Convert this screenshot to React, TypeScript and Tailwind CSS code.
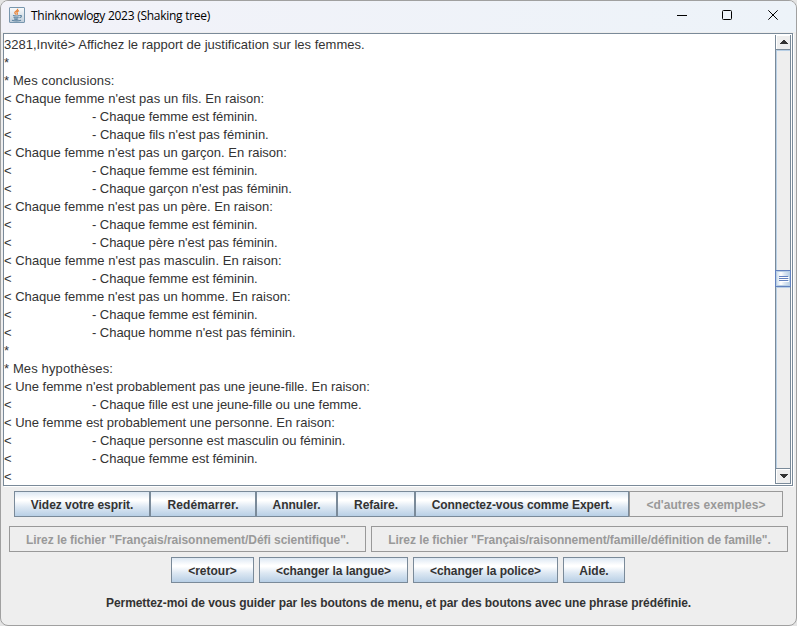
import type { ReactNode } from "react";

type Line = { text: string; indent?: boolean; tracking?: string };

const lines: Line[] = [
  { text: "3281,Invité> Affichez le rapport de justification sur les femmes.", tracking: "tracking-[0.01px]" },
  { text: "*" },
  { text: "* Mes conclusions:", tracking: "tracking-[0.12px]" },
  { text: "< Chaque femme n'est pas un fils. En raison:", tracking: "tracking-[0.035px]" },
  { text: "- Chaque femme est féminin.", indent: true, tracking: "tracking-[-0.045px]" },
  { text: "- Chaque fils n'est pas féminin.", indent: true, tracking: "tracking-[-0.02px]" },
  { text: "< Chaque femme n'est pas un garçon. En raison:", tracking: "tracking-[0.01px]" },
  { text: "- Chaque femme est féminin.", indent: true, tracking: "tracking-[-0.045px]" },
  { text: "- Chaque garçon n'est pas féminin.", indent: true, tracking: "tracking-[-0.04px]" },
  { text: "< Chaque femme n'est pas un père. En raison:", tracking: "tracking-[0px]" },
  { text: "- Chaque femme est féminin.", indent: true, tracking: "tracking-[-0.045px]" },
  { text: "- Chaque père n'est pas féminin.", indent: true, tracking: "tracking-[-0.06px]" },
  { text: "< Chaque femme n'est pas masculin. En raison:", tracking: "tracking-[0.035px]" },
  { text: "- Chaque femme est féminin.", indent: true, tracking: "tracking-[-0.045px]" },
  { text: "< Chaque femme n'est pas un homme. En raison:", tracking: "tracking-[0.01px]" },
  { text: "- Chaque femme est féminin.", indent: true, tracking: "tracking-[-0.045px]" },
  { text: "- Chaque homme n'est pas féminin.", indent: true, tracking: "tracking-[-0.04px]" },
  { text: "*" },
  { text: "* Mes hypothèses:", tracking: "tracking-[0.12px]" },
  { text: "< Une femme n'est probablement pas une jeune-fille. En raison:", tracking: "tracking-[-0.02px]" },
  { text: "- Chaque fille est une jeune-fille ou une femme.", indent: true, tracking: "tracking-[-0.06px]" },
  { text: "< Une femme est probablement une personne. En raison:", tracking: "tracking-[-0.01px]" },
  { text: "- Chaque personne est masculin ou féminin.", indent: true, tracking: "tracking-[-0.025px]" },
  { text: "- Chaque femme est féminin.", indent: true, tracking: "tracking-[-0.045px]" },
  { text: "<" },
];

function MetalButton({ width, disabled, tracking = "", children }: { width: string; disabled?: boolean; tracking?: string; children: ReactNode }) {
  const look = disabled
    ? "border-[#999999] text-[#999999] bg-[#eeeeee]"
    : "border-[#7a8a99] text-[#333333] bg-[linear-gradient(to_bottom,#dde8f3_0%,#ffffff_30%,#ffffff_36%,#dde8f3_62%,#b8cfe5_100%)]";
  return (
    <button disabled={disabled} className={`flex h-[26px] shrink-0 items-center justify-center whitespace-nowrap border pt-[2px] text-[12px] font-bold leading-[14px] ${tracking} ${look} ${width}`}>
      {children}
    </button>
  );
}

function JavaIcon() {
  return (
    <svg width="16" height="16" viewBox="0 0 16 16" fill="none" className="mb-[3px]">
      <defs>
        <linearGradient id="tile" x1="0" y1="0" x2="0" y2="1">
          <stop offset="0" stopColor="#fafbfc" />
          <stop offset="1" stopColor="#bfcdda" />
        </linearGradient>
      </defs>
      <rect x="0.5" y="0.5" width="15" height="15" rx="0.5" fill="url(#tile)" stroke="#7896ae" />
      <path d="M8.6 1.8C9.3 3.8 5.6 4 5.8 5.8c.1.8.9 1.1 1.2 1.8M10 3.6C8 4.6 7.5 5.2 8.2 6.2c.4.6.2 1-.3 1.5" stroke="#e8853a" strokeWidth="1.3" />
      <path d="M4 8.5c1.8.6 4.6.6 6.5 0M4.6 10.4c1.5.5 3.6.5 5 0M5 12c1.2.4 3 .4 4.2 0M10.8 8.6c2.2-.6 2.3 1.4-.3 2.2M3 13.2c2 .9 7 .9 9 0" stroke="#5d83a0" strokeWidth="1.1" />
    </svg>
  );
}

function ScrollBar() {
  return (
    <div className="flex w-4 shrink-0 flex-col border-x border-[#7a8a99] bg-[#eeeeee]">
      <div className="flex h-[15px] items-center justify-center border-b border-b-[#7a8a99] pl-[2px] shadow-[inset_1px_1px_0_#ffffff]">
        <svg width="8" height="4" shapeRendering="crispEdges"><path d="M3 0h2v1h1v1h1v1h1v1H0V3h1V2h1V1h1z" fill="#333333" /></svg>
      </div>
      <div className="h-[220px] border-l border-t border-[#b8cfe5]" />
      <div className="-mx-px flex h-[17px] justify-center border border-[#6382bf] bg-[linear-gradient(to_right,#c5d8eb,#ffffff_35%,#dde8f3_60%,#b8cfe5)] pl-[2px] pt-[5px] shadow-[inset_0_0_0_1px_#b8cfe5]">
        <svg width="10" height="6" shapeRendering="crispEdges">
          <path d="M1 1h9v1H1zM1 3h9v1H1zM1 5h9v1H1z" fill="#ffffff" />
          <path d="M0 0h9v1H0zM0 2h9v1H0zM0 4h9v1H0z" fill="#6382bf" />
        </svg>
      </div>
      <div className="flex-1 border-l border-t border-[#b8cfe5]" />
      <div className="flex h-[16px] items-center justify-center border-y border-[#7a8a99] pl-[2px] shadow-[inset_1px_1px_0_#ffffff]">
        <svg width="8" height="4" shapeRendering="crispEdges"><path d="M0 0h8v1H7v1H6v1H5v1H3V3H2V2H1V1H0z" fill="#333333" /></svg>
      </div>
    </div>
  );
}

export default function App() {
  return (
    <div className="h-[626px] w-[797px] overflow-hidden bg-[#e4e4e4] font-['Liberation_Sans',Arial,sans-serif]">
      <div className="flex h-[626px] w-[797px] flex-col overflow-hidden rounded-[8px] border border-[#a0a0a0] bg-[#eeeeee]">
        <header className="flex h-[31px] shrink-0 items-center bg-[linear-gradient(to_right,#f2f2f9,#edf3f9)] pl-2">
          <JavaIcon />
          <h1 className="ml-[6px] flex-1 whitespace-nowrap pb-px font-['Open_Sans','Noto_Sans',sans-serif] text-[12px] leading-4 tracking-[-0.27px] text-black">Thinknowlogy 2023 (Shaking tree)</h1>
          <div className="flex items-center pb-[3px] pr-[18px]">
            <svg width="10" height="10" className="mr-[35px]" shapeRendering="crispEdges"><path d="M0 5h10v1H0z" fill="#000000" /></svg>
            <svg width="10" height="10" className="mr-[36px]" fill="none" stroke="#000000"><rect x="0.5" y="0.5" width="9" height="9" rx="1" /></svg>
            <svg width="10" height="10" fill="none" stroke="#000000"><path d="M0.3 0.3l9.4 9.4M9.7 0.3L0.3 9.7" /></svg>
          </div>
        </header>

        <main className="ml-[2px] mt-px flex h-[453px] w-[790px] shrink-0 border border-[#7a8a99] bg-white shadow-[1px_1px_0_#ffffff]">
          <div className="flex-1 pt-[2px] text-[13px] leading-[18px] text-[#333333]">
            {lines.map((line, i) => (
              <div key={i} className="flex h-[18px] whitespace-pre">
                {line.indent && <span className="w-[88px]">{"<"}</span>}
                <span className={line.tracking}>{line.text}</span>
              </div>
            ))}
          </div>
          <div className="flex pr-px pt-px pb-px"><ScrollBar /></div>
        </main>

        <nav className="flex flex-col pt-[5px]">
          <div className="flex pl-[13px]">
            <MetalButton width="w-[136px]" tracking="tracking-[-0.04px]">Videz votre esprit.</MetalButton>
            <MetalButton width="w-[106px]" tracking="tracking-[0.1px]">Redémarrer.</MetalButton>
            <MetalButton width="w-[81px]">Annuler.</MetalButton>
            <MetalButton width="w-[78px]">Refaire.</MetalButton>
            <MetalButton width="w-[214px]" tracking="tracking-[-0.05px]">Connectez-vous comme Expert.</MetalButton>
            <MetalButton width="w-[154px]" tracking="tracking-[0.05px]" disabled>{"<d'autres exemples>"}</MetalButton>
          </div>
          <div className="mt-[9px] flex gap-[5px] pl-2">
            <MetalButton width="w-[357px]" tracking="tracking-[-0.05px]" disabled>Lirez le fichier "Français/raisonnement/Défi scientifique".</MetalButton>
            <MetalButton width="w-[417px]" tracking="tracking-[-0.07px]" disabled>Lirez le fichier "Français/raisonnement/famille/définition de famille".</MetalButton>
          </div>
          <div className="mt-[5px] flex gap-[5px] pl-[170px]">
            <MetalButton width="w-[83px]">{"<retour>"}</MetalButton>
            <MetalButton width="w-[149px]" tracking="tracking-[-0.05px]">{"<changer la langue>"}</MetalButton>
            <MetalButton width="w-[145px]" tracking="tracking-[-0.05px]">{"<changer la police>"}</MetalButton>
            <MetalButton width="w-[62px]">Aide.</MetalButton>
          </div>
        </nav>
        <p className="mt-[12px] whitespace-nowrap pl-[105px] text-[12px] font-bold leading-[16px] tracking-[-0.07px] text-[#333333]">Permettez-moi de vous guider par les boutons de menu, et par des boutons avec une phrase prédéfinie.</p>
      </div>
    </div>
  );
}
